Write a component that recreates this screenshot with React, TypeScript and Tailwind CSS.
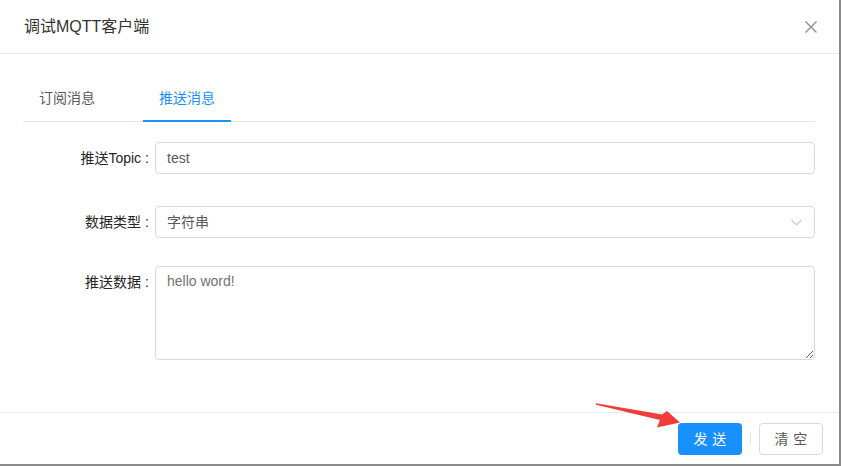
function FormLabel({ text }: { text: string }) {
  return (
    <label className="w-[132px] shrink-0 pr-[6px] text-right leading-[32px] text-[#262626]">
      {text}
      <span className="ml-[4px]">:</span>
    </label>
  )
}

export default function App() {
  return (
    <div className="relative w-[841px] h-[466px] bg-[#8a8a8a] font-['Liberation_Sans','Noto_Sans_CJK_SC',sans-serif]">
      <div className="flex flex-col w-[839px] h-[464px] bg-white">
        <div className="flex items-center justify-between h-[54px] border-b border-[#e8e8e8]">
          <span className="pl-6 text-base leading-[22px] text-[#333333]">调试MQTT客户端</span>
          <button className="flex items-center justify-center w-[56px] h-[54px]">
            <svg width="12" height="12" viewBox="0 0 12 12" fill="none">
              <path d="M0.5 0.5 L11.5 11.5 M11.5 0.5 L0.5 11.5" stroke="#8c8c8c" strokeWidth="1.3" />
            </svg>
          </button>
        </div>

        <div className="flex-1 pl-[23px] pr-[24px] pt-[21px]">
          <div className="flex border-b border-[#e8e8e8] text-sm">
            <div className="px-4 py-3 leading-[22px] mr-8 text-[#595959]">订阅消息</div>
            <div className="relative px-4 py-3 leading-[22px] text-[#1890ff]">
              推送消息
              <span className="absolute left-0 right-0 bottom-[-1px] h-[2px] bg-[#1890ff]" />
            </div>
          </div>

          <div className="mt-[20px] text-sm">
            <div className="flex items-start">
              <FormLabel text="推送Topic" />
              <input
                defaultValue="test"
                className="flex-1 h-[32px] px-[11px] border border-[#d9d9d9] rounded-[4px] text-[#595959] outline-none"
              />
            </div>

            <div className="flex items-start mt-[32px]">
              <FormLabel text="数据类型" />
              <div className="flex-1 flex items-center justify-between h-[32px] pl-[11px] pr-[12px] border border-[#d9d9d9] rounded-[4px] text-[#595959]">
                <span>字符串</span>
                <svg width="11" height="7" viewBox="0 0 11 7" fill="none">
                  <path d="M0.5 0.8 L5.5 5.8 L10.5 0.8" stroke="#bfbfbf" strokeWidth="1.1" />
                </svg>
              </div>
            </div>

            <div className="flex items-start mt-[28px]">
              <FormLabel text="推送数据" />
              <textarea
                defaultValue="hello word!"
                className="flex-1 h-[94px] px-[11px] py-[4px] leading-[21px] border border-[#d9d9d9] rounded-[4px] text-[#737373] outline-none"
              />
            </div>
          </div>
        </div>

        <div className="flex items-center justify-end h-[52px] px-4 border-t border-[#e8e8e8] text-sm">
          <button className="w-[64px] h-[32px] rounded-[4px] bg-[#1890ff] text-white">
            <span className="tracking-[0.34em] mr-[-0.34em]">发送</span>
          </button>
          <span className="w-px h-[13px] mx-2 bg-[#e8e8e8]" />
          <button className="w-[64px] h-[32px] rounded-[4px] border border-[#d9d9d9] bg-white text-[#595959]">
            <span className="tracking-[0.34em] mr-[-0.34em]">清空</span>
          </button>
        </div>
      </div>

      <svg className="absolute left-0 top-0 pointer-events-none" width="841" height="466" viewBox="0 0 841 466">
        <polygon points="596,403.2 662,414.6 667,411 680,422.5 657,427.5 660,420 596,404.8" fill="#f23b3b" />
      </svg>
    </div>
  )
}
